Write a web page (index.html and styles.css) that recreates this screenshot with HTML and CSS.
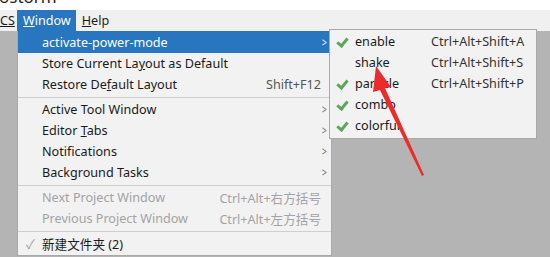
FILE: index.html
```html
<!DOCTYPE html>
<html lang="en">
<head>
    <meta charset="UTF-8">
    <title>Window menu</title>
    <link rel="stylesheet" href="styles.css">
</head>
<body>

    <div class="titlebar"><span>ostorm</span></div>

    <div class="menubar">
        <span class="bar-item cut"><u>CS</u></span>
        <span class="bar-item active"><u>W</u>indow</span>
        <span class="bar-item"><u>H</u>elp</span>
    </div>

    <div class="dropdown">
        <div class="item selected"><span class="label">activate-power-mode</span><span class="chev">&gt;</span></div>
        <div class="item"><span class="label">Store Current La<u>y</u>out as Default</span></div>
        <div class="item"><span class="label">Restore De<u>f</u>ault Layout</span><span class="key">Shift+F12</span></div>
        <div class="sep"></div>
        <div class="item"><span class="label">Active Tool Window</span><span class="chev">&gt;</span></div>
        <div class="item"><span class="label">Editor <u>T</u>abs</span><span class="chev">&gt;</span></div>
        <div class="item"><span class="label">Notifications</span><span class="chev">&gt;</span></div>
        <div class="item"><span class="label">Background Tasks</span><span class="chev">&gt;</span></div>
        <div class="sep"></div>
        <div class="item disabled"><span class="label">Next Project Window</span><span class="key">Ctrl+Alt+右方括号</span></div>
        <div class="item disabled"><span class="label">Previous Project Window</span><span class="key">Ctrl+Alt+左方括号</span></div>
        <div class="sep"></div>
        <div class="item"><span class="tick">✓</span><span class="label">新建文件夹 (2)</span></div>
    </div>

    <div class="submenu">
        <div class="sub-item"><span class="check on"></span><span class="label">enable</span><span class="key">Ctrl+Alt+Shift+A</span></div>
        <div class="sub-item"><span class="check"></span><span class="label">shake</span><span class="key">Ctrl+Alt+Shift+S</span></div>
        <div class="sub-item"><span class="check on"></span><span class="label">particle</span><span class="key">Ctrl+Alt+Shift+P</span></div>
        <div class="sub-item"><span class="check on"></span><span class="label">combo</span></div>
        <div class="sub-item"><span class="check on"></span><span class="label">colorful</span></div>
    </div>

    <!-- red annotation arrow pointing at "shake" -->
    <svg class="annotation" width="550" height="257" viewBox="0 0 550 257">
        <polygon points="376,66 391,87 385,88 424,175 422,176 380,90 373,92" fill="#ee2b2b"/>
    </svg>

</body>
</html>
```

FILE: styles.css
```css
body {
    margin: 0;
    padding: 0;
    width: 550px;
    height: 257px;
    overflow: hidden;
    position: relative;
    background-color: #b4b4b4;
    font-family: "Noto Sans", "Noto Sans CJK SC", sans-serif;
    font-size: 12.6px;
    color: #1a1a1a;
}

.titlebar {
    height: 10px;
    background-color: #fff;
    overflow: hidden;
}

.titlebar span {
    display: block;
    margin-top: -15px;
    margin-left: -1px;
    font-size: 17px;
    color: #222;
}

.menubar {
    height: 21px;
    background-color: #f0f0f0;
    display: flex;
    align-items: center;
    white-space: nowrap;
}

.bar-item {
    height: 21px;
    line-height: 21px;
    padding: 0 6px;
}

.bar-item.cut {
    padding: 0;
    width: 17px;
    overflow: hidden;
}

.bar-item.active {
    background-color: #2875c0;
    color: #fff;
    padding: 0 5px 0 6px;
}

.dropdown {
    position: absolute;
    left: 17px;
    top: 31px;
    width: 313px;
    background-color: #f2f2f2;
    border: 1px solid #a9a9a9;
    border-top: none;
    padding-bottom: 1px;
}

.item {
    height: 21px;
    display: flex;
    align-items: center;
    padding-left: 24px;
    padding-right: 10px;
    position: relative;
    white-space: nowrap;
}

.item .label {
    flex: 1;
}

.item .key {
    color: #555;
}

.item .chev {
    position: absolute;
    right: 3px;
    font-size: 12px;
    color: #666;
    transform: scaleX(0.7);
}

.item.selected {
    background-color: #2875c0;
    color: #fff;
    height: 22px;
}

.item.selected .chev {
    color: #fff;
}

.item.disabled,
.item.disabled .key {
    color: #a3a3a3;
}

.item .tick {
    position: absolute;
    left: 8px;
    color: #a0a0a0;
    font-size: 13px;
}

.sep {
    height: 1px;
    background-color: #cfcfcf;
    margin: 2px 0 1px 0;
}

.submenu {
    position: absolute;
    left: 329px;
    top: 29px;
    width: 206px;
    background-color: #f2f2f2;
    border: 1px solid #a9a9a9;
    padding: 1px 0 2px 0;
}

.sub-item {
    height: 21px;
    display: flex;
    align-items: center;
    white-space: nowrap;
}

.sub-item .check {
    width: 25px;
    height: 21px;
    position: relative;
}

.sub-item .check.on::after {
    content: "";
    position: absolute;
    left: 9px;
    top: 5px;
    width: 4px;
    height: 8px;
    border-right: 3px solid #5fa55a;
    border-bottom: 3px solid #5fa55a;
    transform: rotate(40deg);
}

.sub-item .label {
    width: 76px;
}

.sub-item .key {
    color: #333;
}

.annotation {
    position: absolute;
    left: 0;
    top: 0;
}
```
